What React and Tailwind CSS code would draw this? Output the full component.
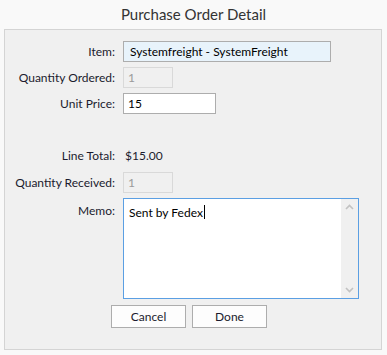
// App.jsx - Purchase order detail dialog

const font = { fontFamily: 'Lato, "Noto Sans", sans-serif' };

const Label = ({ children, top }) => (
  <div
    className={`w-[110px] shrink-0 text-right text-[12px] text-[#1b1b2e] ${top ? 'pt-[4px]' : ''}`}
  >
    {children}
  </div>
);

const Row = ({ label, children, className = '', top }) => (
  <div className={`flex gap-[8px] ${top ? 'items-start' : 'items-center'} ${className}`}>
    <Label top={top}>{label}</Label>
    {children}
  </div>
);

const App = () => {
  return (
    <div className="w-[387px] h-[355px] bg-[#f9f9f9] pt-[3px]" style={font}>
      <h1 className="text-center text-[15px] leading-[22px] text-[#333]">Purchase Order Detail</h1>

      <div className="mx-[4px] mt-[4px] h-[321px] w-[378px] border border-[#d4d4d4] bg-[#f0f0f0] pt-[11px]">
        <Row label="Item:">
          <div className="flex h-[21px] w-[208px] items-center border border-[#adadad] bg-[#e8f3fb] pl-[6px] text-[12px] text-black">
            Systemfreight - SystemFreight
          </div>
        </Row>

        <Row label="Quantity Ordered:" className="mt-[5px]">
          <div className="flex h-[21px] w-[50px] items-center border border-[#d9d9d9] bg-[#f0f0f0] pl-[4px] text-[12px] text-[#9a9a9a]">
            1
          </div>
        </Row>

        <Row label="Unit Price:" className="mt-[5px]">
          <div className="flex h-[21px] w-[93px] items-center border border-[#adadad] bg-white pl-[4px] text-[12px] text-black">
            15
          </div>
        </Row>

        <Row label="Line Total:" className="mt-[32px] h-[20px]">
          <div className="pl-[2px] text-[12px] text-[#1b1b2e]">$15.00</div>
        </Row>

        <Row label="Quantity Received:" className="mt-[6px]">
          <div className="flex h-[21px] w-[50px] items-center border border-[#d9d9d9] bg-[#f0f0f0] pl-[4px] text-[12px] text-[#9a9a9a]">
            1
          </div>
        </Row>

        <Row label="Memo:" className="mt-[5px]" top>
          <div className="flex h-[101px] w-[236px] border border-[#5b9fe3] bg-white">
            <div className="flex-1 pl-[5px] pt-[4px] text-[12px] text-black">
              Sent by Fedex<span className="ml-[1px] inline-block h-[14px] w-[1px] translate-y-[2px] bg-black" />
            </div>
            <div className="flex w-[17px] flex-col items-center justify-between bg-[#f0f0f0] py-[5px]">
              <svg width="9" height="6" viewBox="0 0 9 6">
                <path d="M1 5 L4.5 1.5 L8 5" fill="none" stroke="#c2c2c2" strokeWidth="1.6" />
              </svg>
              <svg width="9" height="6" viewBox="0 0 9 6">
                <path d="M1 1 L4.5 4.5 L8 1" fill="none" stroke="#c2c2c2" strokeWidth="1.6" />
              </svg>
            </div>
          </div>
        </Row>

        <div className="mt-[6px] flex gap-[6px] pl-[106px]">
          <button className="h-[23px] w-[75px] border border-[#adadad] bg-[#fdfdfd] text-[12px] text-[#1b1b2e]">
            Cancel
          </button>
          <button className="h-[23px] w-[75px] border border-[#adadad] bg-[#fdfdfd] text-[12px] text-[#1b1b2e]">
            Done
          </button>
        </div>
      </div>
    </div>
  );
};

export default App;
